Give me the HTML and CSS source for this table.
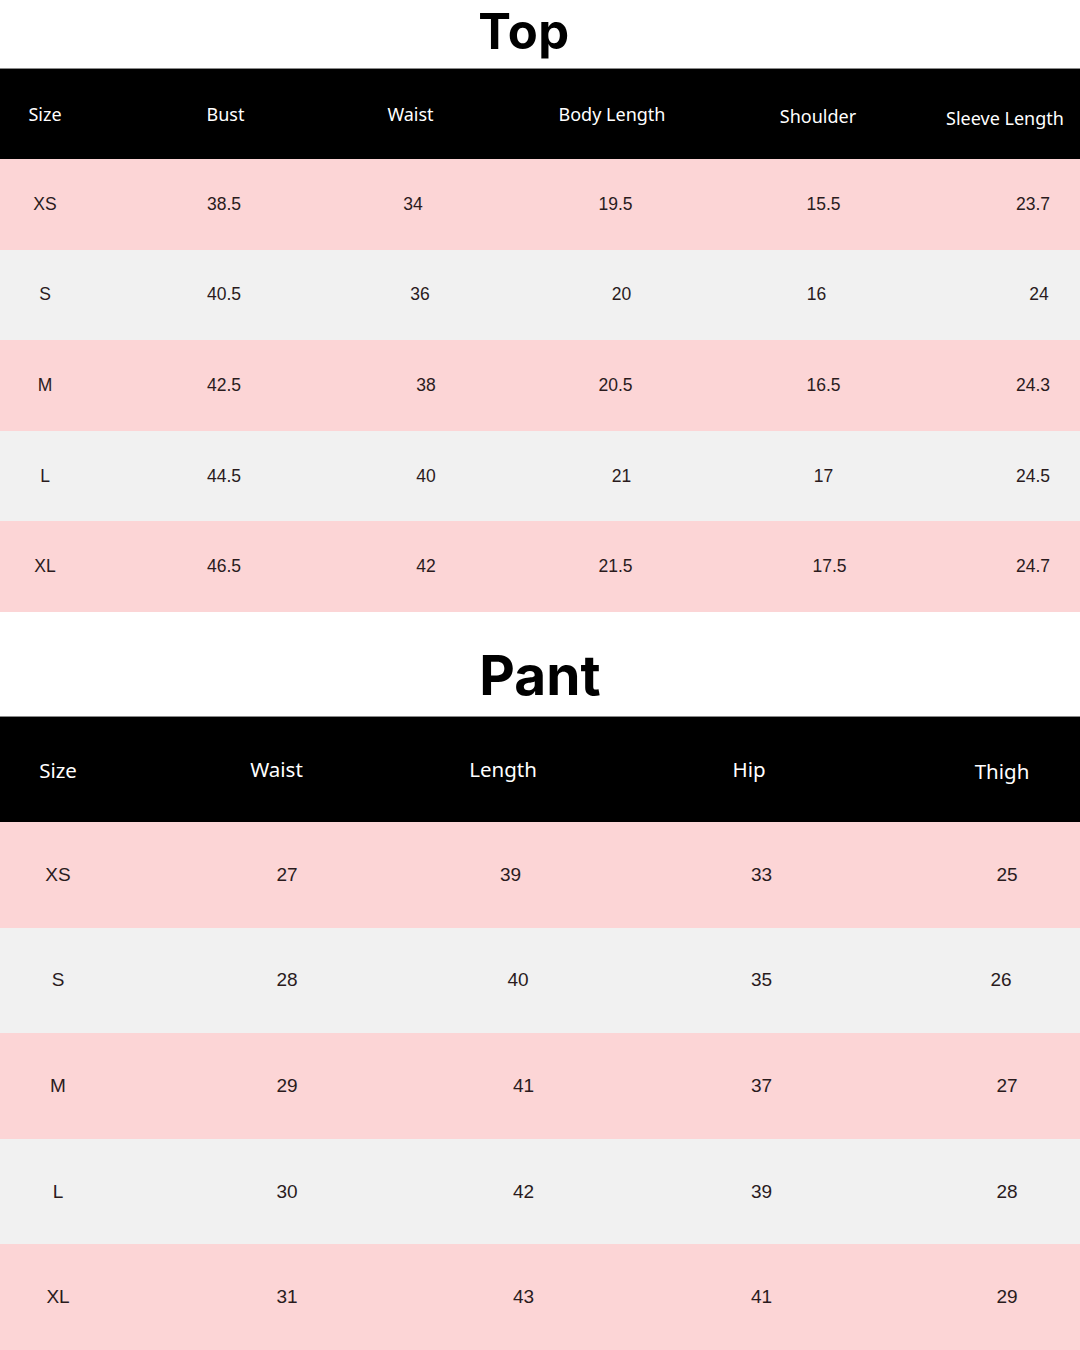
FILE: index.html
```html
<!DOCTYPE html>
<html lang="en">
<head>
<meta charset="utf-8">
<title>Size Chart</title>
<link rel="stylesheet" href="styles.css">
</head>
<body>
<main class="chart">
  <h1 class="title title-top">Top</h1>
  <section class="table table-top">
    <div class="row head">
      <div class="cell">Size</div><div class="cell">Bust</div><div class="cell">Waist</div><div class="cell">Body Length</div><div class="cell">Shoulder</div><div class="cell">Sleeve Length</div>
    </div>
    <div class="row body pink">
      <div class="cell">XS</div><div class="cell">38.5</div><div class="cell shift-l">34</div><div class="cell">19.5</div><div class="cell">15.5</div><div class="cell">23.7</div>
    </div>
    <div class="row body gray">
      <div class="cell">S</div><div class="cell">40.5</div><div class="cell">36</div><div class="cell shift-r">20</div><div class="cell shift-l">16</div><div class="cell shift-r">24</div>
    </div>
    <div class="row body pink">
      <div class="cell">M</div><div class="cell">42.5</div><div class="cell shift-r">38</div><div class="cell">20.5</div><div class="cell">16.5</div><div class="cell">24.3</div>
    </div>
    <div class="row body gray">
      <div class="cell">L</div><div class="cell">44.5</div><div class="cell shift-r">40</div><div class="cell shift-r">21</div><div class="cell">17</div><div class="cell">24.5</div>
    </div>
    <div class="row body pink">
      <div class="cell">XL</div><div class="cell">46.5</div><div class="cell shift-r">42</div><div class="cell">21.5</div><div class="cell shift-r">17.5</div><div class="cell">24.7</div>
    </div>
  </section>
  <h1 class="title title-pant">Pant</h1>
  <section class="table table-pant">
    <div class="row head">
      <div class="cell">Size</div><div class="cell">Waist</div><div class="cell">Length</div><div class="cell">Hip</div><div class="cell">Thigh</div>
    </div>
    <div class="row body pink">
      <div class="cell">XS</div><div class="cell">27</div><div class="cell shift-l">39</div><div class="cell">33</div><div class="cell">25</div>
    </div>
    <div class="row body gray">
      <div class="cell">S</div><div class="cell">28</div><div class="cell">40</div><div class="cell">35</div><div class="cell shift-l">26</div>
    </div>
    <div class="row body pink">
      <div class="cell">M</div><div class="cell">29</div><div class="cell shift-r">41</div><div class="cell">37</div><div class="cell">27</div>
    </div>
    <div class="row body gray">
      <div class="cell">L</div><div class="cell">30</div><div class="cell shift-r">42</div><div class="cell">39</div><div class="cell">28</div>
    </div>
    <div class="row body pink">
      <div class="cell">XL</div><div class="cell">31</div><div class="cell shift-r">43</div><div class="cell">41</div><div class="cell">29</div>
    </div>
  </section>
</main>
</body>
</html>
```

FILE: styles.css
```css
* { box-sizing: border-box; }

html, body {
  margin: 0;
  padding: 0;
  background: #ffffff;
}

.chart {
  width: 1080px;
  height: 1350px;
  overflow: hidden;
  display: flex;
  flex-direction: column;
}

.title {
  margin: 0;
  text-align: center;
  font-family: Inter, "Liberation Sans", sans-serif;
  font-weight: 700;
  color: #000;
}

.title-top {
  height: 68px;
  font-size: 49px;
  line-height: 64px;
  padding-right: 32px;
  letter-spacing: 0.5px;
}

.title-pant {
  height: 104px;
  font-size: 55px;
  line-height: 82px;
  padding-top: 22px;
  letter-spacing: 0;
}

.table {
  display: flex;
  flex-direction: column;
}

.row {
  display: grid;
  align-items: center;
}

.cell {
  text-align: center;
  white-space: nowrap;
}

.head {
  background: #000;
  color: #fff;
  font-family: "Noto Sans", "Open Sans", sans-serif;
  font-weight: 400;
  border-top: 1px solid #8a8a8a;
}

.body {
  font-family: "Liberation Sans", Arial, sans-serif;
  color: #2a1b1d;
}

.pink { background: #fcd5d6; }
.gray { background: #f1f1f1; }

/* Top table */
.table-top .head {
  height: 91px;
  font-size: 18px;
  grid-template-columns: 134px 183px 193px 204px 198px 168px;
}
.table-top .head .cell:nth-child(1) { padding-right: 44px; }
.table-top .head .cell:nth-child(3) { padding-right: 6px; }
.table-top .head .cell:nth-child(5) { padding-left: 10px; padding-top: 4px; }
.table-top .head .cell:nth-child(6) { padding-left: 18px; padding-top: 8px; }

.table-top .body {
  height: 90.6px;
  font-size: 17.5px;
  grid-template-columns: 134px 188px 196px 201px 209px 152px;
}
.table-top .body .cell:nth-child(1) { padding-right: 44px; }
.table-top .body .cell:nth-child(2) { padding-right: 8px; }
.table-top .body .cell:nth-child(4) { padding-right: 6px; }
.table-top .body .cell:nth-child(6) { padding-left: 58px; }

/* Pant table */
.table-pant .head {
  height: 106px;
  font-size: 20.5px;
  grid-template-columns: 167px 223px 236px 250px 204px;
}
.table-pant .head .cell:nth-child(1) { padding-right: 51px; padding-top: 2px; }
.table-pant .head .cell:nth-child(2) { padding-right: 4px; }
.table-pant .head .cell:nth-child(3) { padding-right: 10px; }
.table-pant .head .cell:nth-child(4) { padding-right: 4px; }
.table-pant .head .cell:nth-child(5) { padding-left: 48px; padding-top: 4px; }

.table-pant .body {
  height: 105.6px;
  font-size: 19px;
  grid-template-columns: 172px 230px 237px 245px 196px;
}
.table-pant .body .cell:nth-child(1) { padding-right: 56px; }
.table-pant .body .cell:nth-child(3) { padding-right: 5px; }
.table-pant .body .cell:nth-child(5) { padding-left: 50px; }

/* small irregular nudges seen in the source chart */
.table-top .body .cell.shift-r { padding-left: 12px; padding-right: 0; }
.table-top .body .cell.shift-l { padding-right: 14px; padding-left: 0; }
.table-top .body .cell:nth-child(6).shift-r { padding-left: 70px; }
.table-top .body .cell:nth-child(4).shift-r { padding-left: 6px; }
.table-pant .body .cell.shift-r { padding-left: 6px; padding-right: 0; }
.table-pant .body .cell.shift-l { padding-right: 20px; padding-left: 0; }
.table-pant .body .cell:nth-child(5).shift-l { padding-left: 38px; padding-right: 0; }
```
